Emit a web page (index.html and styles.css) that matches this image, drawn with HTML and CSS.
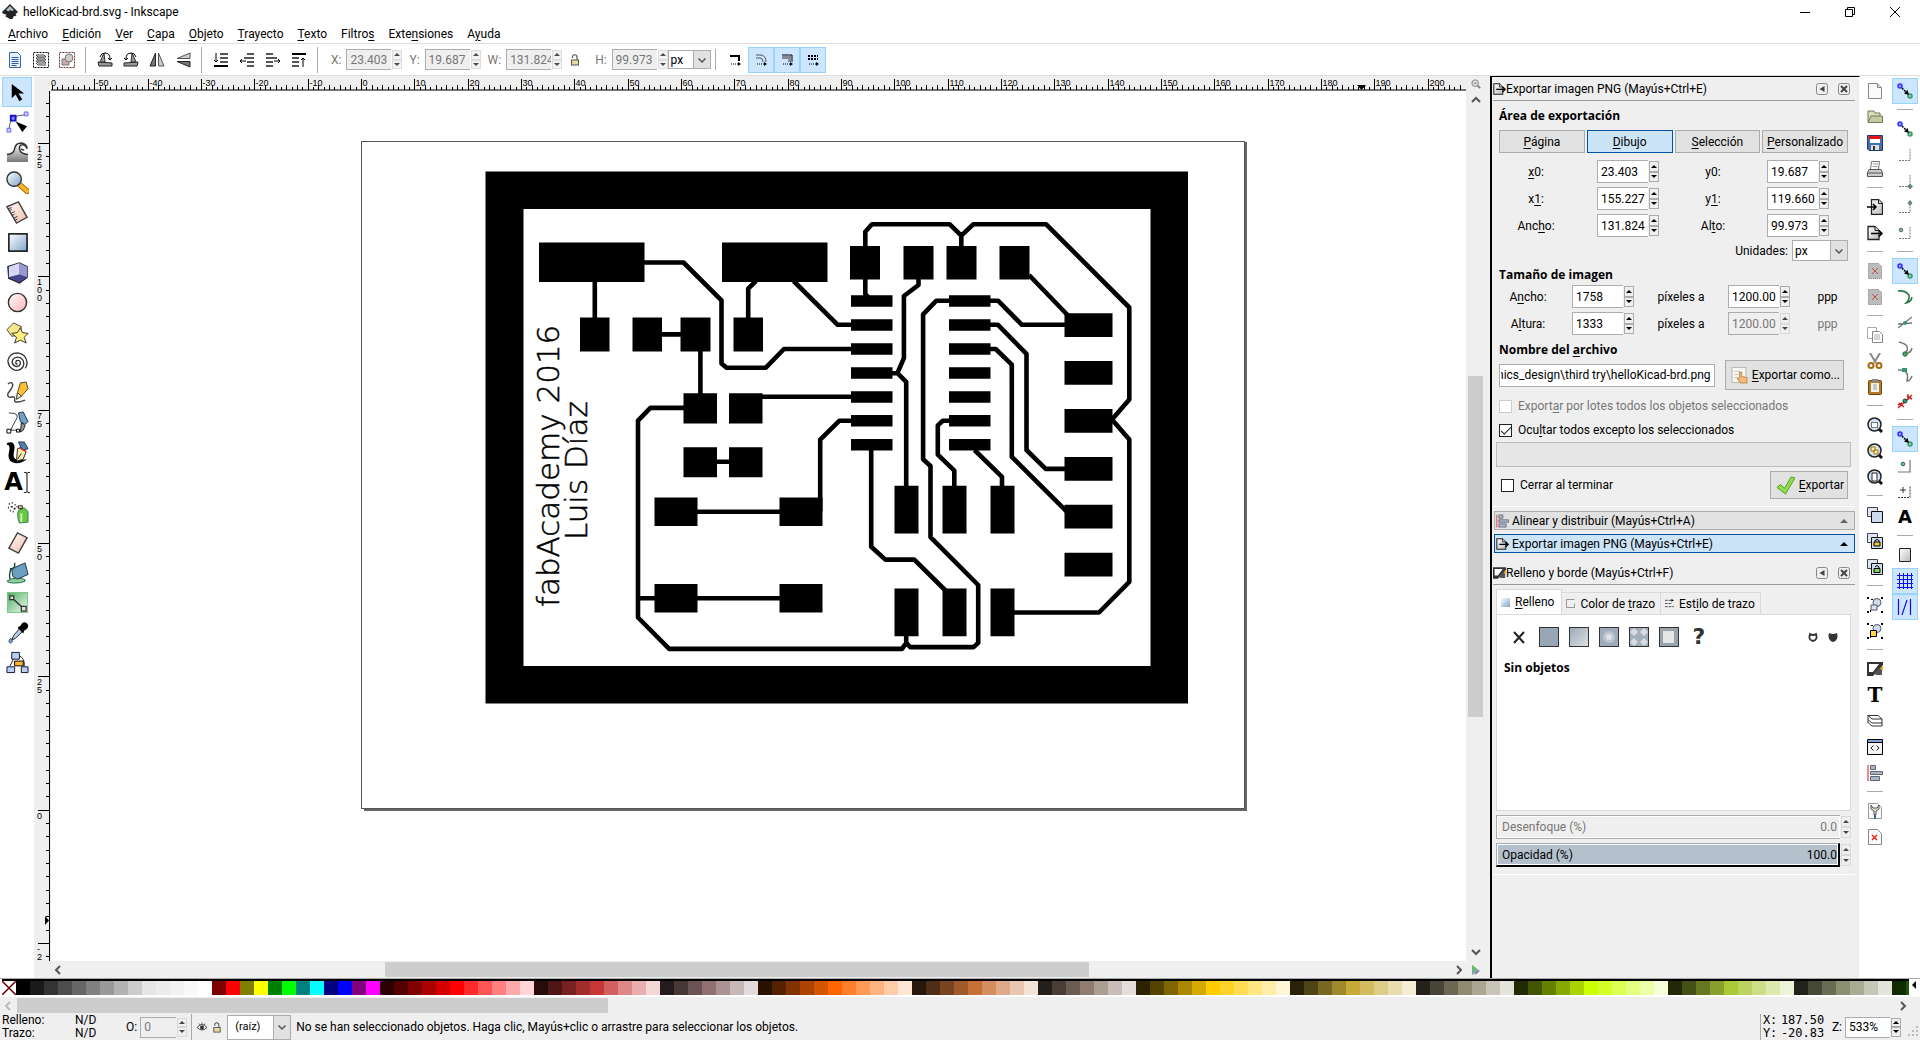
FILE: index.html
```html
<!DOCTYPE html>
<html lang="es">
<head>
  <meta charset="UTF-8">
  <meta name="viewport" content="width=device-width, initial-scale=1.0">
  <title>helloKicad-brd.svg - Inkscape</title>
  <link rel="stylesheet" href="styles.css">
</head>
<body>
  <!-- Iconos compartidos -->
  <svg class="defs" aria-hidden="true">
    <defs>
      <linearGradient id="blue" x1="0" y1="0" x2="1" y2="1"><stop offset="0" stop-color="#fff"/><stop offset="1" stop-color="#7fa3cc"/></linearGradient>
      <linearGradient id="pink" x1="0" y1="0" x2="1" y2="1"><stop offset="0" stop-color="#fff"/><stop offset="1" stop-color="#f3b9a4"/></linearGradient>
      <linearGradient id="rose" x1="0" y1="0" x2="1" y2="1"><stop offset="0" stop-color="#fff"/><stop offset="1" stop-color="#ffb0b8"/></linearGradient>
      <linearGradient id="green" x1="0" y1="0" x2="1" y2="1"><stop offset="0" stop-color="#4fae62"/><stop offset="1" stop-color="#f2fbf3"/></linearGradient>
      <linearGradient id="gray" x1="0" y1="0" x2="0" y2="1"><stop offset="0" stop-color="#fff"/><stop offset="1" stop-color="#777"/></linearGradient>
      <linearGradient id="sheet" x1="0" y1="0" x2="1" y2="1"><stop offset="0" stop-color="#fff"/><stop offset="1" stop-color="#bbb"/></linearGradient>
      <linearGradient id="linear" x1="0" y1="0" x2="1" y2="1"><stop offset="0" stop-color="#9aa8b7"/><stop offset="1" stop-color="#dfe2e5"/></linearGradient>
    </defs>
    <symbol id="snap" viewBox="0 0 16 16"><circle cx="3" cy="3" r="2" fill="#99f" stroke="#33f" stroke-width="1.5"/><circle cx="13" cy="13" r="2" fill="#8c9" stroke="#396" stroke-width="1.5"/><path d="M5 5l5 5" stroke="#000" stroke-width="1.5" stroke-dasharray="2 1"/><path d="M12 12l-5-1.500 3.500-3.500z"/></symbol>
    <symbol id="lens" viewBox="0 0 16 16"><path d="M12 12l3 3" stroke="#111" stroke-width="3"/><circle cx="7.500" cy="7.500" r="6.500" fill="#d3e1f5" stroke="#222" stroke-width="1.500"/></symbol>
    <symbol id="page-out" viewBox="0 0 16 16"><path d="M1 1.500h7l4 4v9H1z" fill="url(#sheet)" stroke="#222" stroke-width="1.300"/><path d="M8 1.500v4h4" fill="#ccc" stroke="#222"/><path d="M4 8.500h11M12 5.500l3 3-3 3" fill="none" stroke="#000" stroke-width="1.500"/></symbol>
    <symbol id="pen-fill" viewBox="0 0 16 16"><path d="M0 1h16v3L6 15H0z" fill="#333"/><path d="M2 3h10l-6 8H2z" fill="#fff"/><path d="M15 4v10H9L7 12z" fill="#555"/><path d="M16 4v5l-3-1z" fill="#f5b21a"/></symbol>
    <symbol id="align" viewBox="0 0 16 16"><path d="M1 0v16" stroke="#d66" stroke-width="1.500"/><path d="M3.500 .500h5v4h-5zM3.500 6.500h12v3h-12zM3.500 11.500h9v4h-9z" fill="#a9b8c9" stroke="#667"/></symbol>
    <symbol id="collapse" viewBox="0 0 12 12"><rect x=".500" y=".500" width="11" height="11" rx="2" fill="none" stroke="#888"/><path d="M8.500 3v6L3.500 6z" fill="#444"/></symbol>
    <symbol id="close" viewBox="0 0 12 12"><rect x=".500" y=".500" width="11" height="11" rx="2" fill="none" stroke="#888"/><path d="M3 3l6 6M9 3L3 9" stroke="#444" stroke-width="2"/></symbol>
    <symbol id="chevron" viewBox="0 0 10 10"><path d="M1.500 3.500L5 7l3.500-3.500" fill="none" stroke="#555" stroke-width="1.500"/></symbol>
    <symbol id="lock" viewBox="0 0 10 12"><path d="M2.500 4V3a2 2 0 0 1 4.500 0V6" fill="none" stroke="#555" stroke-width="1.200"/><rect x="1.500" y="6" width="7" height="5" fill="#e8dc9a" stroke="#555"/></symbol>
    <symbol id="corner" viewBox="0 0 16 16"><path d="M2 13.500h11V2" fill="none" stroke="#777" stroke-width="1" stroke-dasharray="2 1"/></symbol>
    <symbol id="doc-off" viewBox="0 0 16 16"><path d="M1.500 .500h10l3 3v12h-13z" fill="#bbb" stroke="#777" stroke-dasharray="1 1"/><path d="M5 5l6 6M11 5l-6 6" stroke="#b55"/></symbol>
    <symbol id="pair" viewBox="0 0 16 16"><path d="M.500 .500h10v9H.500z" fill="#dce6f2" stroke="#445"/><path d="M4.500 4.500h11v11h-11z" fill="#cfdced" stroke="#111"/></symbol>
    <symbol id="group" viewBox="0 0 16 16"><path d="M0 0h2v2H0zM14 0h2v2h-2zM0 14h2v2H0zM14 14h2v2h-2zM4 2h2v1H4zM3 13h1v2H3z"/><circle cx="10" cy="5.500" r="4" fill="#cfdced" stroke="#556"/></symbol>
  </svg>

  <header class="titlebar">
    <svg class="logo" viewBox="0 0 16 16"><path d="M8 0l7.500 7.500q1 1.500-2 2l1 2-3 1-1 2.500H8l-2-1-3-2 2-1-4-1.500Q-.500 9 .500 7.500z" fill="#222"/><path d="M8 2l4 4-2 1-2-1-1.500 1.500L4 6z" fill="#aebdcc"/></svg>
    <h1>helloKicad-brd.svg - Inkscape</h1>
    <div class="window-buttons">
      <button aria-label="Minimizar"><svg viewBox="0 0 10 10"><path d="M0 5.500h10" stroke="#000"/></svg></button>
      <button aria-label="Restaurar"><svg viewBox="0 0 10 10"><path d="M.500 2.500h7v7h-7zM2.500 2.500v-2h7v7h-2" fill="none" stroke="#000"/></svg></button>
      <button aria-label="Cerrar"><svg viewBox="0 0 10 10"><path d="M0 0l10 10M10 0L0 10" stroke="#000"/></svg></button>
    </div>
  </header>

  <nav class="menubar">
    <a href="#"><u>A</u>rchivo</a>
    <a href="#"><u>E</u>dición</a>
    <a href="#"><u>V</u>er</a>
    <a href="#"><u>C</u>apa</a>
    <a href="#"><u>O</u>bjeto</a>
    <a href="#"><u>T</u>rayecto</a>
    <a href="#"><u>T</u>exto</a>
    <a href="#">Filtro<u>s</u></a>
    <a href="#">Exte<u>n</u>siones</a>
    <a href="#">A<u>y</u>uda</a>
  </nav>

  <!-- Controles de herramienta -->
  <div class="controls">
    <div class="icon-group">
      <button aria-label="Seleccionar todo"><svg viewBox="0 0 16 16"><path d="M2.500 .500h8l3 3v12h-11z" fill="#e8f0fb" stroke="#35659f"/><path d="M4.500 5.500h7M4.500 7.500h7M4.500 9.500h7M4.500 11.500h7M4.500 13.500h5" stroke="#2a5ca0"/></svg></button>
      <button aria-label="Seleccionar en todas las capas"><svg viewBox="0 0 16 16"><rect x=".500" y=".500" width="15" height="15" fill="none" stroke="#000" stroke-dasharray="2 1"/><path d="M3 3h8l2 2H5zM3 6h8l2 2H5zM3 9h8l2 2H5zM3 11l2 2h8" fill="#eee" stroke="#444"/></svg></button>
      <button aria-label="Deseleccionar"><svg viewBox="0 0 16 16"><rect x=".500" y=".500" width="15" height="15" fill="none" stroke="#733" stroke-dasharray="2 1"/><path d="M3 7h7v6H3z" fill="#caa" stroke="#777"/><circle cx="10" cy="6" r="4" fill="#ccc" stroke="#777"/></svg></button>
    </div>
    <div class="icon-group">
      <button aria-label="Rotar a la izquierda"><svg viewBox="0 0 16 16"><path d="M1 10l14 1v3H2z" fill="#999" stroke="#222"/><path d="M7 1l1 9H3z" fill="#999" stroke="#333"/><path d="M3 5q1-4 5-4 5 0 5 6M11 6l2 2 2-2" fill="none" stroke="#000"/></svg></button>
      <button aria-label="Rotar a la derecha"><svg viewBox="0 0 16 16"><path d="M1 11l14-1-1 4H1z" fill="#999" stroke="#222"/><path d="M9 1l-1 9h5z" fill="#999" stroke="#333"/><path d="M13 5q-1-4-5-4-5 0-5 6M1 6l2 2 2-2" fill="none" stroke="#000"/></svg></button>
      <button aria-label="Reflejar horizontalmente"><svg viewBox="0 0 16 16"><path d="M6.500 1v13H1z" fill="#777" stroke="#222"/><path d="M9.500 1v13H15z" fill="#ccc" stroke="#555"/></svg></button>
      <button aria-label="Reflejar verticalmente"><svg viewBox="0 0 16 16"><path d="M15 1v5.500H2z" fill="#ccc" stroke="#555"/><path d="M15 15V9.500H2z" fill="#777" stroke="#222"/></svg></button>
    </div>
    <div class="icon-group">
      <button aria-label="Bajar al fondo"><svg viewBox="0 0 16 16"><path d="M7 2h8M7 6h8M7 10h8" stroke="#555" stroke-width="2"/><path d="M1 14h14" stroke="#000" stroke-width="2"/><path d="M3 1v9M1 8l2 2 2-2" fill="none" stroke="#000"/></svg></button>
      <button aria-label="Bajar"><svg viewBox="0 0 16 16"><path d="M8 2h7M5 6h10M8 10h7M8 14h7" stroke="#555" stroke-width="2"/><path d="M7 9H1M3 7L1 9l2 2" fill="none" stroke="#000"/></svg></button>
      <button aria-label="Elevar"><svg viewBox="0 0 16 16"><path d="M1 2h7M1 6h11M1 10h7M1 14h7" stroke="#555" stroke-width="2"/><path d="M9 9h6M13 7l2 2-2 2" fill="none" stroke="#000"/></svg></button>
      <button aria-label="Elevar al frente"><svg viewBox="0 0 16 16"><path d="M1 6h7M1 10h7M1 14h7" stroke="#555" stroke-width="2"/><path d="M1 2h14" stroke="#000" stroke-width="2"/><path d="M12 15V6M10 8l2-2 2 2" fill="none" stroke="#000"/></svg></button>
    </div>
    <div class="fields">
      <label for="sel-x">X:</label>
      <span class="spin"><input id="sel-x" value="23.403" disabled><span class="arrows"><button disabled aria-label="Más"></button><button disabled aria-label="Menos"></button></span></span>
      <label for="sel-y">Y:</label>
      <span class="spin"><input id="sel-y" value="19.687" disabled><span class="arrows"><button disabled aria-label="Más"></button><button disabled aria-label="Menos"></button></span></span>
      <label for="sel-w">W:</label>
      <span class="spin"><input id="sel-w" value="131.824" disabled><span class="arrows"><button disabled aria-label="Más"></button><button disabled aria-label="Menos"></button></span></span>
      <button class="lock" aria-label="Bloquear proporción"><svg viewBox="0 0 10 12"><use href="#lock"/></svg></button>
      <label for="sel-h">H:</label>
      <span class="spin"><input id="sel-h" value="99.973" disabled><span class="arrows"><button disabled aria-label="Más"></button><button disabled aria-label="Menos"></button></span></span>
      <span class="combo unit"><select aria-label="Unidad"><option>px</option></select><svg><use href="#chevron"/></svg></span>
    </div>
    <div class="toggles">
      <button aria-label="Escalar trazo"><svg viewBox="0 0 16 16"><path d="M3 4h9v5" fill="none" stroke="#000" stroke-width="2"/><path d="M4 12h8" stroke="#000" stroke-dasharray="1 1"/><path d="M11 10l3 2-3 2z"/></svg></button>
      <button class="on" aria-label="Escalar esquinas"><svg viewBox="0 0 16 16"><path d="M3 3h4q6 0 6 7M3 6h4q3 0 3 4" fill="none" stroke="#555"/><path d="M4 12h8" stroke="#000" stroke-dasharray="1 1"/><path d="M11 10l3 2-3 2z"/></svg></button>
      <button class="on" aria-label="Mover degradados"><svg viewBox="0 0 16 16"><path d="M3 3h10v7" fill="none" stroke="#000"/><path d="M3 4h9v6H9V7H3z" fill="#889"/><path d="M4 12h8" stroke="#000" stroke-dasharray="1 1"/><path d="M11 10l3 2-3 2z"/></svg></button>
      <button class="on" aria-label="Mover patrones"><svg viewBox="0 0 16 16"><path d="M3 4h10M3 7h10" stroke="#000" stroke-width="2" stroke-dasharray="2 1"/><path d="M4 12h8" stroke="#000" stroke-dasharray="1 1"/><path d="M11 10l3 2-3 2z"/></svg></button>
    </div>
  </div>

  <main class="workspace">
    <!-- Caja de herramientas -->
    <div class="toolbox">
      <button class="on" aria-label="Selector"><svg viewBox="0 0 24 24"><path d="M6 3v15l4-4 4 7 3-2-4-6h6z"/></svg></button>
      <button aria-label="Nodos"><svg viewBox="0 0 24 24"><path d="M3 20Q3 4 20 4" fill="none" stroke="#555"/><path d="M5 5h5v5H5z" fill="#88f" stroke="#11c" stroke-width="2"/><path d="M1 18h4v4H1zM19 1h4v4h-4z" fill="#ccf" stroke="#66e"/><path d="M10 11l12 5-5 6z"/></svg></button>
      <button aria-label="Retocar"><svg viewBox="0 0 24 24"><path d="M1 14q7 0 8-6 1-6 7-6 6 1 6 6-2-3-5-2-3 2-2 5 1 3 8 3v8H1z" fill="url(#gray)"/><path d="M1 14q7 0 8-6 1-6 7-6 6 1 6 6-2-4-4-4-4-1-4 4 1 6 9 6M16 8q1 2 3 1" fill="none" stroke="#333" stroke-width="1.500"/></svg></button>
      <button aria-label="Ampliación"><svg viewBox="0 0 24 24"><path d="M15 15l7 6" stroke="#a66a00" stroke-width="6" stroke-linecap="round"/><path d="M15 15l7 6" stroke="#ffb52a" stroke-width="4" stroke-linecap="round"/><circle cx="8.500" cy="8.500" r="7.500" fill="url(#blue)" stroke="#333" stroke-width="1.500"/></svg></button>
      <button aria-label="Medir"><svg viewBox="0 0 24 24"><path d="M1 6l12-5 9 16-11 6z" fill="url(#pink)" stroke="#444" stroke-width="1.500"/><path d="M2 8l4-1M3 10l3-1M5 13l4-2M6 15l3-1M8 18l4-2M9 20l3-1" stroke="#333"/></svg></button>
      <button aria-label="Rectángulo"><svg viewBox="0 0 24 24"><rect x="3" y="3" width="19" height="18" fill="url(#blue)" stroke="#000" stroke-width="1.500"/></svg></button>
      <button aria-label="Cubo 3D"><svg viewBox="0 0 24 24"><path d="M2 6l12-4 8 4v11l-8 6-11-5z" fill="#6868b0" stroke="#223" stroke-width="1.500"/><path d="M3 6l11-4v12L3 17z" fill="#d8d8f6"/><path d="M14 2l8 4v11l-8-3z" fill="#9898d0"/><path d="M3 17l11-3 8 3-8 5z" fill="#45458b"/></svg></button>
      <button aria-label="Elipse"><svg viewBox="0 0 24 24"><circle cx="12" cy="12" r="9.500" fill="url(#rose)" stroke="#333" stroke-width="1.500"/></svg></button>
      <button aria-label="Estrella"><svg viewBox="0 0 24 24"><path d="M8 2l8 4-1 8-9 2-5-7z" fill="#f7e98b" stroke="#444"/><path d="M15 7l2 5 6 1-4 4 2 6-6-3-6 3 2-6-5-4 6-1z" fill="#ffef7d" stroke="#333"/></svg></button>
      <button aria-label="Espiral"><svg viewBox="0 0 24 24"><path d="M12 14q-3-1-1-4 4-1 4 3-1 4-5 3-5-2-3-7 3-4 8-2 5 3 3 9-3 5-9 4-7-3-7-10 2-8 10-8 9 1 10 10 0 4-2 6" fill="none" stroke="#333" stroke-width="1.400"/></svg></button>
      <button aria-label="Lápiz"><svg viewBox="0 0 24 24"><path d="M2 3q5-3 5 1 0 3-5 9-1 4 3 4 5-2 4 3 0 4 11 0" fill="none" stroke="#444" stroke-width="1.500"/><path d="M15 2l6-1 2 7-7 8-5 3 1-7z" fill="#ffbf2f" stroke="#444"/><path d="M12 12l4 4-5 3z" fill="#fff0cc" stroke="#444"/></svg></button>
      <button aria-label="Pluma"><svg viewBox="0 0 24 24"><path d="M3 2q13 0 7 8-3 5-5 10h8" fill="none" stroke="#333"/><path d="M1 19h4v4H1zM11 19h3v3h-3z" fill="#fff" stroke="#000"/><path d="M13 2l5-1 5 10-3 3-5-3z" fill="#6fa0c8" stroke="#234"/><path d="M16 12l4 3-2 5-3 2z" fill="#999" stroke="#222"/></svg></button>
      <button aria-label="Caligrafía"><svg viewBox="0 0 24 24"><path d="M1 2q8-3 8 5c-1 8-3 11 4 13l9-1q-7 5-13 4Q1 21 3 12 5 4 1 4z"/><path d="M13 1h6l4 7-6 2z" fill="#4e82ad" stroke="#234"/><path d="M12 8l3-1 6 4-3 8-7 2z" fill="#ffe9b0" stroke="#222"/><path d="M12 19l4-6" stroke="#222"/><path d="M14 7l7 4" stroke="#d22" stroke-width="1.500"/></svg></button>
      <button class="text-tool" aria-label="Texto"><b>A</b><svg viewBox="0 0 6 24"><path d="M0 1.500h2l1 1 1-1h2M3 2v20M0 22.500h2l1-1 1 1h2" fill="none" stroke="#000"/></svg></button>
      <button aria-label="Aerosol"><svg viewBox="0 0 24 24"><path d="M3 3h1M6 2h1M9 4h1M2 7h1M5 6h2M8 8h2M4 10h1M7 11h1M11 6h1" stroke="#222" stroke-width="1.800"/><path d="M13 10l6-3 4 4v11l-9 1q-3-8-1-13z" fill="#68c93f" stroke="#375"/><path d="M13 8V5h4v3z" fill="#f0d890" stroke="#222"/><path d="M16 13v9" stroke="#d4f5c0" stroke-width="2"/></svg></button>
      <button aria-label="Borrador"><svg viewBox="0 0 24 24"><path d="M12 2l10 5-9 16-10-5z" fill="url(#pink)" stroke="#444" stroke-width="1.500"/></svg></button>
      <button aria-label="Relleno"><svg viewBox="0 0 24 24"><path d="M1 21q4-3 10-3 10 0 9 3-4 2-10 2-8 0-9-2z" fill="#8fd19b" stroke="#265"/><path d="M6 8l14-6 3 12-11 5-5-3z" fill="#6c9ec0" stroke="#234"/><path d="M4 8q6 1 5-6M6 8Q3 11 4 19" fill="none" stroke="#244" stroke-width="1.500"/></svg></button>
      <button aria-label="Degradado"><svg viewBox="0 0 24 24"><rect x="1.500" y="1.500" width="21" height="21" fill="url(#green)" stroke="#7cc38a"/><path d="M6 7l11 10" stroke="#333" stroke-width="1.500"/><path d="M4 5h4v4H4zM16 16h5v5h-5z" fill="#ddd" stroke="#333" stroke-width="1.300"/></svg></button>
      <button aria-label="Cuentagotas"><svg viewBox="0 0 24 24"><path d="M15 7l3 3-8 8-4 2 2-5z" fill="#b6cdeb" stroke="#222"/><path d="M12 7l6 6 1-3q5-2 4-6-2-4-6-2l-2 3z"/><path d="M5 18q-4 4 0 5 3-1 0-5z" fill="#79a6dc" stroke="#357"/></svg></button>
      <button aria-label="Conector"><svg viewBox="0 0 24 24"><path d="M8 8L4 16M14 5q6 3 5 11" fill="none" stroke="#222"/><path d="M6 1.500h8v7H6zM1 16.500h8v6H1zM16 16.500h7v6h-7z" fill="#b9d0ef" stroke="#113"/><path d="M9 10.500h9v5H9z" fill="#ffb52a" stroke="#000"/></svg></button>
    </div>

    <div class="editor">
      <svg class="ruler ruler-h" id="ruler-h"></svg>
      <button class="zoom-corner" aria-label="Zoom"><svg viewBox="0 0 12 12"><circle cx="5" cy="5" r="4" fill="#ddd" stroke="#777"/><path d="M8 8l3 3" stroke="#777" stroke-width="2"/><path d="M3 5h4" stroke="#777"/></svg></button>
      <svg class="ruler ruler-v" id="ruler-v"></svg>
      <svg class="canvas">
        <path d="M313 718.500H1194.500V51" fill="none" stroke="#666" stroke-width="3"/>
        <rect x="310.500" y="50.500" width="883" height="667" fill="#fff" stroke="#555"/>
        <g transform="translate(429 69)">
          <path d="M5.500 11.500H708V543.500H5.500zM43.500 49V506H670.500V49z" fill-rule="evenodd"/>
          <!-- pads -->
          <path d="M59 82.500h105.500v39.500H59zM242 82.500h105.500v39.500H242zM370 86h30v33.500h-30zM423.500 86h30v33.500h-30zM466.500 86h30v33.500h-30zM519.500 86h30v33.500h-30z
            M100 157.500h29.500v34H100zM152.500 157.500h29.500v34h-29.500zM200.500 157.500h30v34h-30zM253.500 157.500h29.500v34h-29.500z
            M371 135.300h41.500v11.500H371zM371 159.300h41.500v11.500H371zM371 183.200h41.500v11.500H371zM371 207.200h41.500v11.500H371zM371 231.200h41.500v11.500H371zM371 255.100h41.500v11.500H371zM371 279.100h41.500v11.500H371z
            M469 135.300h41.500v11.500H469zM469 159.300h41.500v11.500H469zM469 183.200h41.500v11.500H469zM469 207.200h41.500v11.500H469zM469 231.200h41.500v11.500H469zM469 255.100h41.500v11.500H469zM469 279.100h41.500v11.500H469z
            M584.500 153.200h48v23.700h-48zM584.500 201.100h48v23.700h-48zM584.500 249h48v23.700h-48zM584.500 297h48v23.700h-48zM584.500 344.800h48v23.700h-48zM584.500 392.800h48v23.700h-48z
            M203.500 233.300h33.500v30.200h-33.500zM249 233.300h33.500v30.200H249zM203.500 287.200h33.500v30h-33.500zM249 287.200h33.500v30H249z
            M174.500 337.500h43v28.500h-43zM299.500 337.500h43v28.500h-43zM174.500 424h43v28.500h-43zM299.500 424h43v28.500h-43z
            M414.500 325.700h24v47.700h-24zM462.500 325.700h24v47.700h-24zM510.500 325.700h24v47.700h-24zM414.500 428.600h24v47.700h-24zM462.500 428.600h24v47.700h-24zM510.500 428.600h24v47.700h-24z"/>
          <!-- pistas -->
          <path fill="none" stroke="#000" stroke-width="4.600" stroke-linejoin="round" d="M114.800 121V158
            M164 102.500H203.500L241.500 140.300V203.500L246.600 207.800H285.600L304 189H371
            M181 174.400H201M220.400 191V234M268.200 158V128.600L276 121M313.600 121L357.700 164.800H371
            M385.300 86V71.800L392 64.300H469.800L481.300 75.700V86
            M481.300 75.700L493.200 64.300H566.200L649.300 147.500V239.600L632 259.500L649.300 279.600V421.800L619 452.500H534
            M385.300 119V134L388 137M438.500 119V125L423.900 136V198.200L417.400 213.200L426.200 221.800V326M412 213.200H417.400
            M549 115L588 155.500
            M469 140.700H456.400L443.100 154.300V299.300L450.500 306V377.100L498.200 425V482.900L493.600 487.100H430.300L426.200 482.900V476
            M426.200 482.900L422 488.900H189.200L158 457.500V260.700L170.400 247.900H204
            M158 438.200H175M217 438.200H300M217 351.800H300
            M510 140.700H518L541.900 164.800H585M510 164.800H518L546.500 193.900V290L565.700 308.900H585
            M510 189H515.700L531.800 204.700V296.800L587 351.800
            M469 260.700H462.800L457.800 265.400V294.600L474.300 310.700V326M494.500 290L522 316.800V326
            M282 236.800H371M371 260.700H359.500L340.200 279.600V351
            M391.200 290V386.800L405.400 399.600H434.300L466 431M236 301.800H250"/>
          <text class="silk" transform="translate(79 447) rotate(-90)">fabAcademy 2016</text>
          <text class="silk" transform="translate(107 380) rotate(-90)">Luis Díaz</text>
        </g>
      </svg>
      <div class="scroll scroll-v">
        <svg viewBox="0 0 10 10"><path d="M1 7l4-4 4 4" fill="none" stroke="#555" stroke-width="2"/></svg>
        <div class="track"><div class="thumb"></div></div>
        <svg viewBox="0 0 10 10"><path d="M1 3l4 4 4-4" fill="none" stroke="#555" stroke-width="2"/></svg>
      </div>
      <div class="scroll scroll-h">
        <svg viewBox="0 0 10 10"><path d="M7 1L3 5l4 4" fill="none" stroke="#555" stroke-width="2"/></svg>
        <div class="track"><div class="thumb"></div></div>
        <svg viewBox="0 0 10 10"><path d="M3 1l4 4-4 4" fill="none" stroke="#555" stroke-width="2"/></svg>
      </div>
      <button class="cms-corner" aria-label="Gestión de color"><svg viewBox="0 0 10 10"><path d="M1 0l8 6-8 4z" fill="#7aa"/><path d="M1 0l4 3-4 4z" fill="#6b6"/><path d="M5 7l4-1-5 4z" fill="#a57"/></svg></button>
    </div>

    <!-- Panel de diálogos -->
    <aside class="dock">
      <div class="dialog-head">
        <svg class="i14"><use href="#page-out"/></svg>
        <h2>Exportar imagen PNG (Mayús+Ctrl+E)</h2>
        <button aria-label="Iconizar"><svg><use href="#collapse"/></svg></button>
        <button aria-label="Cerrar"><svg><use href="#close"/></svg></button>
      </div>
      <form class="export">
        <h3>Área de exportación</h3>
        <div class="area-buttons">
          <button type="button"><span><u>P</u>ágina</span></button>
          <button type="button" class="on"><span><u>D</u>ibujo</span></button>
          <button type="button"><span><u>S</u>elección</span></button>
          <button type="button"><span><u>P</u>ersonalizado</span></button>
        </div>
        <div class="area-grid">
          <label for="x0"><u>x</u>0:</label>
          <span class="spin"><input id="x0" value="23.403"><span class="arrows"><button type="button" aria-label="Más"></button><button type="button" aria-label="Menos"></button></span></span>
          <label for="y0">y0:</label>
          <span class="spin"><input id="y0" value="19.687"><span class="arrows"><button type="button" aria-label="Más"></button><button type="button" aria-label="Menos"></button></span></span>
          <label for="x1">x<u>1</u>:</label>
          <span class="spin"><input id="x1" value="155.227"><span class="arrows"><button type="button" aria-label="Más"></button><button type="button" aria-label="Menos"></button></span></span>
          <label for="y1">y<u>1</u>:</label>
          <span class="spin"><input id="y1" value="119.660"><span class="arrows"><button type="button" aria-label="Más"></button><button type="button" aria-label="Menos"></button></span></span>
          <label for="area-w">Anc<u>h</u>o:</label>
          <span class="spin"><input id="area-w" value="131.824"><span class="arrows"><button type="button" aria-label="Más"></button><button type="button" aria-label="Menos"></button></span></span>
          <label for="area-h">Al<u>t</u>o:</label>
          <span class="spin"><input id="area-h" value="99.973"><span class="arrows"><button type="button" aria-label="Más"></button><button type="button" aria-label="Menos"></button></span></span>
        </div>
        <div class="units">
          <label for="units">Unidades:</label>
          <span class="combo"><select id="units"><option>px</option></select><svg><use href="#chevron"/></svg></span>
        </div>
        <h3>Tamaño de imagen</h3>
        <div class="size-grid">
          <label for="img-w">A<u>n</u>cho:</label>
          <span class="spin"><input id="img-w" value="1758"><span class="arrows"><button type="button" aria-label="Más"></button><button type="button" aria-label="Menos"></button></span></span>
          <label for="dpi-x">píxeles a</label>
          <span class="spin"><input id="dpi-x" value="1200.00"><span class="arrows"><button type="button" aria-label="Más"></button><button type="button" aria-label="Menos"></button></span></span>
          <span>ppp</span>
          <label for="img-h">A<u>l</u>tura:</label>
          <span class="spin"><input id="img-h" value="1333"><span class="arrows"><button type="button" aria-label="Más"></button><button type="button" aria-label="Menos"></button></span></span>
          <label for="dpi-y">píxeles a</label>
          <span class="spin"><input id="dpi-y" value="1200.00" disabled><span class="arrows"><button type="button" disabled aria-label="Más"></button><button type="button" disabled aria-label="Menos"></button></span></span>
          <span class="muted">ppp</span>
        </div>
        <h3><label for="filename">Nombre del <u>a</u>rchivo</label></h3>
        <div class="file-row">
          <input id="filename" class="entry" value="nics_design\third try\helloKicad-brd.png">
          <button type="button" class="big"><svg viewBox="0 0 16 16"><path d="M1 .500h13v14H1z" fill="#f6f6f2" stroke="#bbb"/><path d="M3 4h6M3 7h4M3 10h4" stroke="#ccc"/><path d="M8 5h2v4l5 1v5H9l-3-4 2-1z" fill="#f0bd80" stroke="#c98f4c"/></svg><span><u>E</u>xportar como...</span></button>
        </div>
        <label class="check muted"><input type="checkbox" disabled><span>Export<u>a</u>r por lotes todos los objetos seleccionados</span></label>
        <label class="check"><input type="checkbox" checked><span>Ocu<u>l</u>tar todos excepto los seleccionados</span></label>
        <div class="progress"></div>
        <div class="export-row">
          <label class="check"><input type="checkbox"><span>Cerrar al terminar</span></label>
          <button type="button" class="big"><svg viewBox="0 0 20 20"><path d="M1 12l4-3 4 4 7-12 4 1-10 17z" fill="#8fe04a" stroke="#4f9a24"/></svg><span><u>E</u>xportar</span></button>
        </div>
      </form>
      <div class="dialog-tabs">
        <button><svg class="i14"><use href="#align"/></svg><span>Alinear y distribuir (Mayús+Ctrl+A)</span><i></i></button>
        <button class="on"><svg class="i14"><use href="#page-out"/></svg><span>Exportar imagen PNG (Mayús+Ctrl+E)</span><i></i></button>
      </div>
      <div class="dialog-head">
        <svg class="i14"><use href="#pen-fill"/></svg>
        <h2>Relleno y borde (Mayús+Ctrl+F)</h2>
        <button aria-label="Iconizar"><svg><use href="#collapse"/></svg></button>
        <button aria-label="Cerrar"><svg><use href="#close"/></svg></button>
      </div>
      <section class="fill">
        <div class="tabs">
          <button class="on"><svg viewBox="0 0 10 10"><rect width="10" height="10" fill="url(#blue)"/></svg><span><u>R</u>elleno</span></button>
          <button><svg viewBox="0 0 10 10"><path d="M9.500 5v4.500h-9v-9h9" fill="none" stroke="#888"/></svg><span>Color de <u>t</u>razo</span></button>
          <button><svg viewBox="0 0 10 10"><path d="M0 1.500h8M0 5h8M0 8.500h10" stroke="#444" stroke-dasharray="3 1"/><path d="M7 0l3 1.500L7 3z"/></svg><span>Est<u>i</u>lo de trazo</span></button>
        </div>
        <div class="tab-page">
          <div class="paint">
            <button aria-label="Sin pintura"><svg viewBox="0 0 20 20"><path d="M5 5l10 11M15 5L5 16" stroke="#222" stroke-width="2"/></svg></button>
            <button aria-label="Color uniforme"><svg viewBox="0 0 20 20"><rect x=".500" y=".500" width="19" height="19" fill="#98a6b6" stroke="#333"/></svg></button>
            <button aria-label="Degradado lineal"><svg viewBox="0 0 20 20"><rect x=".500" y=".500" width="19" height="19" fill="url(#linear)" stroke="#333"/></svg></button>
            <button aria-label="Degradado radial"><svg viewBox="0 0 20 20"><rect x=".500" y=".500" width="19" height="19" fill="#9eacbc" stroke="#333"/><circle cx="10" cy="10" r="6" fill="#bac5d0"/><circle cx="10" cy="10" r="3" fill="#dde3e9"/></svg></button>
            <button aria-label="Patrón"><svg viewBox="0 0 20 20"><rect x=".500" y=".500" width="19" height="19" fill="#a3afbd" stroke="#333"/><path d="M5 1l4 4-4 4-4-4zM15 1l4 4-4 4-4-4zM5 11l4 4-4 4-4-4zM15 11l4 4-4 4-4-4z" fill="#d9dce0"/></svg></button>
            <button aria-label="Muestra"><svg viewBox="0 0 20 20"><rect x=".500" y=".500" width="19" height="19" fill="#9aa4af" stroke="#333"/><path d="M4 4h11v12H4z" fill="#e4e6e8"/></svg></button>
            <button aria-label="Desconocido"><b>?</b></button>
            <span class="rules">
              <button aria-label="Par-impar"><svg viewBox="0 0 10 10"><path d="M2 2q3 2 6 0 2 6-3 7-5-1-3-7z" fill="none" stroke="#333" stroke-width="1.800"/></svg></button>
              <button aria-label="Sólido"><svg viewBox="0 0 10 10"><path d="M1 1q4 2 8 0 2 7-4 9-6-2-4-9z" fill="#333"/></svg></button>
            </span>
          </div>
          <strong>Sin objetos</strong>
        </div>
        <div class="bar muted">
          <div class="bar-body"><label for="blur">Desenfoque (%)</label><input id="blur" value="0.0" disabled></div>
          <span class="arrows"><button disabled aria-label="Más"></button><button disabled aria-label="Menos"></button></span>
        </div>
        <div class="bar full">
          <div class="bar-body"><label for="opacity">Opacidad (%)</label><input id="opacity" value="100.0"></div>
          <span class="arrows"><button disabled aria-label="Más"></button><button disabled aria-label="Menos"></button></span>
        </div>
      </section>
    </aside>

    <!-- Barra de comandos -->
    <div class="sidebar commands">
      <button aria-label="Nuevo"><svg viewBox="0 0 16 16"><path d="M1.500 .500h9l4 4v11h-13z" fill="#fafafa" stroke="#888"/><path d="M10.500 .500v4h4" fill="#ddd" stroke="#888"/></svg></button>
      <button aria-label="Abrir"><svg viewBox="0 0 16 16"><path d="M1 13V2h6l1 2h5v3" fill="#d9dcb8" stroke="#77795c"/><path d="M1 13.500L4 7h11.500v6.500z" fill="#c5caa3" stroke="#77795c"/></svg></button>
      <button aria-label="Guardar"><svg viewBox="0 0 16 16"><path d="M.500 .500h15v15H2l-1.500-1.500z" fill="#456fb0" stroke="#223b66"/><path d="M3 1h10v7H3z" fill="#fff"/><path d="M2 1h12v3H2z" fill="#e01515"/><path d="M4 10h8v5H4z" fill="#ddd"/><path d="M6 11h2v4H6z" fill="#333"/></svg></button>
      <button aria-label="Imprimir"><svg viewBox="0 0 16 16"><path d="M4.500 .500h8l-1 8h-8z" fill="#fff" stroke="#777"/><path d="M6 3h5M5.500 5.500h5" stroke="#999"/><path d="M2 8.500h12l1.500 3v4H.500v-4z" fill="#ccc" stroke="#555"/><path d="M1 12h14" stroke="#555"/></svg></button>
      <hr>
      <button aria-label="Importar"><svg viewBox="0 0 16 16"><path d="M4.500 .500h7l4 4v11h-11z" fill="url(#sheet)" stroke="#222" stroke-width="1.300"/><path d="M11.500 .500v4h4" fill="#ccc" stroke="#222"/><path d="M0 8h9M6 5l3 3-3 3" fill="none" stroke="#000" stroke-width="1.500"/></svg></button>
      <button aria-label="Exportar"><svg><use href="#page-out"/></svg></button>
      <hr>
      <button aria-label="Deshacer"><svg><use href="#doc-off"/></svg></button>
      <button aria-label="Rehacer"><svg><use href="#doc-off"/></svg></button>
      <hr>
      <button aria-label="Copiar"><svg viewBox="0 0 16 16"><path d="M.500 .500h9v11h-9z" fill="#fff" stroke="#aaa"/><path d="M5.500 4.500h7l3 3v8h-10z" fill="#fff" stroke="#888"/><path d="M7 8h6M7 10h6M7 12h6" stroke="#aaa"/></svg></button>
      <button aria-label="Cortar"><svg viewBox="0 0 16 16"><path d="M3 0l6 10M13 0L7 10" stroke="#888" stroke-width="2"/><circle cx="4" cy="12.500" r="2.500" fill="none" stroke="#a96b12" stroke-width="2"/><circle cx="12" cy="12.500" r="2.500" fill="none" stroke="#a96b12" stroke-width="2"/></svg></button>
      <button aria-label="Pegar"><svg viewBox="0 0 16 16"><rect x="1.500" y="1.500" width="13" height="14" rx="1" fill="#b57a2a" stroke="#6d4510"/><path d="M4 4h8v9H4z" fill="#f6f6f0"/><path d="M5 0h6v3H5z" fill="#888"/><path d="M6 6h4M6 8h4M6 10h4" stroke="#999"/></svg></button>
      <hr>
      <button aria-label="Ajustar selección"><svg viewBox="0 0 16 16"><use href="#lens"/><path d="M4.500 5.500h6v5h-6z" fill="#fff" stroke="#000" stroke-dasharray="1 1"/></svg></button>
      <button aria-label="Ajustar dibujo"><svg viewBox="0 0 16 16"><use href="#lens"/><path d="M4 4h4v4H4zM7 7h4v4H7z" fill="#ffe9a8" stroke="#a70"/></svg></button>
      <button aria-label="Ajustar página"><svg viewBox="0 0 16 16"><use href="#lens"/><path d="M5 4h5v8H5z" fill="#fff" stroke="#222"/></svg></button>
      <hr>
      <button aria-label="Duplicar"><svg><use href="#pair"/></svg></button>
      <button aria-label="Clonar"><svg viewBox="0 0 16 16"><use href="#pair"/><path d="M7 9h6v4H7z" fill="#f7c430" stroke="#000"/><path d="M8 9V7.500q2-2 4 0V9" fill="none" stroke="#000"/></svg></button>
      <button aria-label="Desvincular clon"><svg viewBox="0 0 16 16"><use href="#pair"/><path d="M7 9.500h6v4H7z" fill="#7ed957" stroke="#000"/><path d="M8 8q2-3 4 0v1" fill="none" stroke="#000"/></svg></button>
      <hr>
      <button aria-label="Agrupar"><svg viewBox="0 0 16 16"><use href="#group"/><path d="M4 8h6v5H4z" fill="#dbe6f3" stroke="#556"/></svg></button>
      <button aria-label="Desagrupar"><svg viewBox="0 0 16 16"><use href="#group"/><path d="M3.500 7.500h6v6h-6z" fill="#ffd84a" stroke="#000"/></svg></button>
      <hr>
      <button aria-label="Relleno y borde"><svg><use href="#pen-fill"/></svg></button>
      <button class="glyph serif" aria-label="Texto y tipografía"><b>T</b></button>
      <button aria-label="Capas"><svg viewBox="0 0 16 16"><path d="M1 2.500h10l4 3.500H5zM1 6.500l4 3.500h10M1 9.500l4 3.500h10" fill="#fff" stroke="#333"/><path d="M1 2v8M15 6v7" stroke="#333"/></svg></button>
      <button aria-label="Editor XML"><svg viewBox="0 0 16 16"><path d="M.500 .500h15v15H.500z" fill="#f4f4f4" stroke="#000"/><path d="M1 1h14v2H1z" fill="#7da7d9"/><path d="M1 3.500h14" stroke="#000"/><path d="M6.500 6.500L4 9l2.500 2.500M9.500 6.500L12 9l-2.500 2.500" fill="none" stroke="#222"/></svg></button>
      <button aria-label="Alinear y distribuir"><svg><use href="#align"/></svg></button>
      <hr>
      <button aria-label="Preferencias"><svg viewBox="0 0 16 16"><path d="M1.500 .500h9l4 4v11h-13z" fill="#fafafa" stroke="#999"/><path d="M4 2v4l3 2v4h2V8l3-2V2l-2 3H6z" fill="#ddd" stroke="#555"/><path d="M7 12h2v4H7z" fill="#36a"/></svg></button>
      <button aria-label="Propiedades del documento"><svg viewBox="0 0 16 16"><path d="M1.500 .500h9l4 4v11h-13z" fill="#fafafa" stroke="#888"/><path d="M5 6l5 5M10 6l-5 5" stroke="#e22" stroke-width="1.500"/></svg></button>
    </div>

    <!-- Barra de ajuste -->
    <div class="sidebar snapbar">
      <button class="on" aria-label="Activar ajuste"><svg><use href="#snap"/></svg></button>
      <hr>
      <button aria-label="Ajustar cajas"><svg><use href="#snap"/></svg></button>
      <button aria-label="Bordes"><svg><use href="#corner"/></svg></button>
      <button aria-label="Esquinas"><svg viewBox="0 0 16 16"><use href="#corner"/><path d="M13 10.500l3 3-3 3-3-3z" fill="#687"/></svg></button>
      <button aria-label="Puntos medios de bordes"><svg viewBox="0 0 16 16"><use href="#corner"/><path d="M13 1l2.500 3L13 7l-2.500-3z" fill="#687"/></svg></button>
      <button aria-label="Centros"><svg viewBox="0 0 16 16"><use href="#corner"/><circle cx="4" cy="5" r="1.800" fill="#9b9" stroke="#465"/></svg></button>
      <hr>
      <button class="on" aria-label="Ajustar nodos"><svg><use href="#snap"/></svg></button>
      <button aria-label="A trayectos"><svg viewBox="0 0 16 16"><path d="M1 2q7-1 11 4 1 4-3 8 5-1 6-6" fill="none" stroke="#2a7a44" stroke-width="1.600"/></svg></button>
      <button aria-label="Intersecciones"><svg viewBox="0 0 16 16"><path d="M1 13L15 2M1 9l14-1" stroke="#777" stroke-width="1.300"/><circle cx="8" cy="8" r="2" fill="#396"/></svg></button>
      <button aria-label="Nodos vértice"><svg viewBox="0 0 16 16"><path d="M2 1q13 3 6 12 6-1 7-6" fill="none" stroke="#777" stroke-width="1.500"/><circle cx="8" cy="13" r="2.200" fill="#48a868" stroke="#264"/></svg></button>
      <button aria-label="Nodos suaves"><svg viewBox="0 0 16 16"><path d="M1 3q12-1 9 11 3 0 5-5" fill="none" stroke="#777" stroke-width="1.500"/><path d="M5 1h5v4H5z" fill="#396"/></svg></button>
      <button aria-label="Puntos medios de línea"><svg viewBox="0 0 16 16"><path d="M1 15L15 2M2 10l5 4M1 12l4-2M10 3l5 3M11 1v6" stroke="#c22" stroke-width="1.500"/><circle cx="8" cy="8" r="2" fill="#396" stroke="#143"/></svg></button>
      <hr>
      <button class="on" aria-label="Ajustar otros"><svg><use href="#snap"/></svg></button>
      <button aria-label="Centros de objetos"><svg viewBox="0 0 16 16"><path d="M1 15h12V3" fill="none" stroke="#777" stroke-width="1.200"/><circle cx="6" cy="7" r="1.800" fill="#7c8" stroke="#264"/></svg></button>
      <button aria-label="Centro de rotación"><svg viewBox="0 0 16 16"><path d="M1 14.500h12V3" fill="none" stroke="#333" stroke-dasharray="2 1"/><path d="M3 7h6M6 4v6" stroke="#333"/></svg></button>
      <button class="glyph" aria-label="Línea base de texto"><b>A</b></button>
      <hr>
      <button aria-label="Borde de página"><svg viewBox="0 0 16 16"><path d="M2.500 1.500h11v13h-11z" fill="url(#sheet)" stroke="#222"/></svg></button>
      <button class="on" aria-label="Cuadrículas"><svg viewBox="0 0 16 16"><path d="M0 2.500h16M0 6.500h16M0 10.500h16M0 14.500h16M2.500 0v16M6.500 0v16M10.500 0v16M14.500 0v16" stroke="#11e"/></svg></button>
      <button class="on" aria-label="Guías"><svg viewBox="0 0 16 16"><path d="M1.500 0v16M13.500 0v16M10 1L5 16" stroke="#11e" stroke-width="1.200"/></svg></button>
    </div>
  </main>

  <div class="palette">
    <div class="swatches" id="swatches"></div>
    <button aria-label="Menú de paleta"></button>
  </div>
  <div class="scroll scroll-h palette-scroll">
    <svg viewBox="0 0 10 10"><path d="M7 1L3 5l4 4" fill="none" stroke="#bbb" stroke-width="2"/></svg>
    <div class="track"><div class="thumb"></div></div>
    <svg viewBox="0 0 10 10"><path d="M3 1l4 4-4 4" fill="none" stroke="#555" stroke-width="2"/></svg>
  </div>

  <footer class="status">
    <dl class="style">
      <dt>Relleno:</dt><dd>N/D</dd>
      <dt>Trazo:</dt><dd>N/D</dd>
    </dl>
    <label for="alpha">O:</label>
    <span class="spin alpha"><input id="alpha" value="0" disabled><span class="arrows"><button disabled aria-label="Más"></button><button disabled aria-label="Menos"></button></span></span>
    <div class="layer">
      <button aria-label="Visibilidad"><svg viewBox="0 0 10 10"><path d="M0 5q5-6 10 0-5 5-10 0z" fill="none" stroke="#444"/><circle cx="5" cy="5" r="2" fill="#333"/><path d="M2 1l1 2M5 0v2M8 1L7 3" stroke="#666"/></svg></button>
      <button aria-label="Bloquear capa"><svg viewBox="0 0 10 12"><use href="#lock"/></svg></button>
      <span class="combo"><select aria-label="Capa"><option>(raíz)</option></select><svg><use href="#chevron"/></svg></span>
    </div>
    <p>No se han seleccionado objetos. Haga clic, Mayús+clic o arrastre para seleccionar los objetos.</p>
    <dl class="coords">
      <dt>X:</dt><dd>187.50</dd>
      <dt>Y:</dt><dd>-20.83</dd>
    </dl>
    <label for="zoom">Z:</label>
    <span class="spin zoom"><input id="zoom" value="533%"><span class="arrows"><button aria-label="Más"></button><button aria-label="Menos"></button></span></span>
    <svg class="grip" viewBox="0 0 10 10"><path d="M8 1h2M8 5h2M4 5h2M8 9h2M4 9h2M0 9h2" stroke="#bbb" stroke-width="2"/></svg>
  </footer>

  <script src="script.js"></script>
</body>
</html>
```
FILE: styles.css
```css
* {
  box-sizing: border-box;
}

body {
  margin: 0;
  height: 100vh;
  display: flex;
  flex-direction: column;
  overflow: hidden;
  background: #fff;
  color: #000;
  font-family: Roboto, 'Open Sans', sans-serif;
  font-size: 12px;
  line-height: 16px;
}

button,
input,
select {
  margin: 0;
  padding: 0;
  border: none;
  border-radius: 0;
  background: none;
  color: inherit;
  font: inherit;
}

h1, h2, h3, p, dl, dd {
  margin: 0;
  font-size: 12px;
  font-weight: normal;
}

u {
  text-underline-offset: 2px;
}

button {
  display: flex;
  align-items: center;
  justify-content: center;
}

svg {
  display: block;
  flex: none;
}

.defs {
  position: absolute;
  width: 0;
  height: 0;
}

.muted {
  color: #777;
}

/* Barra de título y menú */
.titlebar {
  display: flex;
  align-items: center;
  height: 24px;
  padding: 0 14px 0 2px;
}

.logo {
  width: 16px;
  height: 16px;
  margin-right: 5px;
}

.window-buttons {
  display: flex;
  margin-left: auto;
  height: 20px;
}

.window-buttons button {
  width: 45px;
  height: 20px;
}

.window-buttons button:last-child {
  width: 34px;
  padding-left: 12px;
}

.window-buttons svg {
  width: 10px;
  height: 10px;
}

.menubar {
  display: flex;
  align-items: center;
  gap: 14px;
  height: 20px;
  padding: 0 8px;
  border-bottom: 1px solid #ddd;
}

.menubar a {
  color: #000;
  text-decoration: none;
}

/* Controles */
.controls {
  display: flex;
  align-items: center;
  height: 32px;
  padding-left: 2px;
  border-bottom: 1px solid #ddd;
}

.icon-group {
  display: flex;
  padding-right: 5px;
  margin-right: 6px;
  border-right: 1px solid #aaa;
}

.icon-group button,
.toggles button {
  width: 26px;
  height: 26px;
}

.icon-group svg,
.toggles svg {
  width: 16px;
  height: 16px;
}

.fields {
  display: flex;
  align-items: center;
  color: #777;
  padding-right: 4px;
  margin-right: 6px;
  border-right: 1px solid #aaa;
}

.fields label {
  margin: 0 5px 0 7px;
}

.fields .spin {
  width: 56px;
  height: 21px;
}

.lock {
  width: 26px;
}

.lock svg {
  width: 10px;
  height: 12px;
}

.toggles {
  display: flex;
}

.on {
  background: #cce6ff;
  box-shadow: inset 0 0 0 1px #99d1ff;
}

/* Campos numéricos */
.spin {
  display: flex;
  width: 62px;
  height: 23px;
}

.spin input {
  flex: 1;
  min-width: 0;
  padding-left: 3px;
  border: 1px solid #abadb3;
  border-right: none;
  background: #fff;
}

.spin input:disabled {
  background: #efefef;
  color: #777;
}

.arrows {
  display: flex;
  flex-direction: column;
  width: 10px;
  margin: 1px 0 1px 1px;
  flex: none;
}

.arrows button {
  flex: 1;
  border: 1px solid #acacac;
  background: #efefef;
}

.arrows button::before {
  content: '';
  border: 3px solid transparent;
  border-top: none;
  border-bottom: 3px solid #000;
}

.arrows button:last-child::before {
  border-top: 3px solid #000;
  border-bottom: none;
}

.arrows button:disabled {
  border-color: #d0d0d0;
  opacity: 0.7;
}

.combo {
  display: flex;
  align-items: center;
  width: 56px;
  height: 21px;
  border: 1px solid #abadb3;
  background: linear-gradient(90deg, #fff calc(100% - 17px), #abadb3 calc(100% - 17px) calc(100% - 16px), #e1e1e1 calc(100% - 16px));
}

.combo select {
  flex: 1;
  min-width: 0;
  height: 100%;
  padding-left: 2px;
  appearance: none;
  color: #000;
}

.combo svg {
  width: 10px;
  height: 10px;
  margin-right: 3px;
}

.unit {
  width: 43px;
  height: 19px;
}

/* Zona de trabajo */
.workspace {
  flex: 1;
  min-height: 0;
  display: flex;
}

.toolbox {
  width: 34px;
  padding: 1px 2px;
  overflow: hidden;
}

.toolbox button {
  width: 30px;
  height: 30px;
}

.toolbox svg {
  width: 23px;
  height: 23px;
}

.toolbox .text-tool {
  gap: 1px;
}

.text-tool b {
  font: bold 24px/24px 'DejaVu Sans', sans-serif;
}

.toolbox .text-tool svg {
  width: 6px;
}

.editor {
  flex: 1;
  min-width: 0;
  display: grid;
  grid-template-columns: 17px 1fr 24px;
  grid-template-rows: 15px 1fr 17px;
  background: #efefef;
}

.ruler {
  width: 100%;
  height: 100%;
  overflow: hidden;
  font-family: 'Liberation Sans', sans-serif;
  font-size: 9px;
}

.ruler-h {
  grid-column: 1 / 3;
}

.ruler-v {
  grid-column: 1;
  grid-row: 2;
}

.canvas {
  width: 100%;
  height: 100%;
  background: #fff;
}

.silk {
  font-family: 'DejaVu Sans', sans-serif;
  font-weight: 200;
  font-size: 31px;
  stroke: #000;
  stroke-width: 0.5px;
}

.zoom-corner,
.cms-corner {
  width: 19px;
}

.zoom-corner svg,
.cms-corner svg {
  width: 10px;
  height: 10px;
}

.scroll {
  display: flex;
  align-items: center;
}

.scroll > svg {
  width: 10px;
  height: 10px;
}

.scroll .track {
  flex: 1;
  display: flex;
}

.scroll .thumb {
  background: #cdcdcd;
}

.scroll-v {
  flex-direction: column;
  width: 15px;
  margin-left: 2px;
  padding: 4px 0;
}

.scroll-v .track {
  flex-direction: column;
  width: 100%;
  padding: 271px 0 230px;
}

.scroll-v .thumb {
  flex: 1;
}

.scroll-h {
  grid-column: 2;
  padding: 0 2px;
}

.scroll-h .track {
  height: 15px;
  padding: 0 365px 0 322px;
}

.scroll-h .thumb {
  flex: 1;
}

.cms-corner {
  grid-column: 3;
}

/* Panel derecho */
.dock {
  width: 370px;
  padding: 0 4px 0 1px;
  border-top: 1px solid #000;
  border-left: 2px solid #000;
  border-right: 1px solid #fff;
  background: #efefef;
  overflow: hidden;
}

.dialog-head {
  display: flex;
  align-items: center;
  height: 24px;
  border-bottom: 1px solid #999;
}

.i14 {
  width: 13px;
  height: 14px;
}

.dialog-head h2 {
  flex: 1;
}

.dialog-head button {
  width: 22px;
}

.dialog-head button svg {
  width: 12px;
  height: 12px;
}

.export {
  padding: 7px 7px 7px 6px;
  border-bottom: 1px solid #fff;
}

.export h3,
.tab-page strong {
  font-family: 'Open Sans', sans-serif;
  font-weight: bold;
}

.area-buttons {
  display: grid;
  grid-template-columns: repeat(4, 1fr);
  gap: 2px;
  height: 23px;
  margin-top: 6px;
}

.area-buttons button,
.big {
  border: 1px solid #acacac;
  background: #e1e1e1;
}

.area-buttons .on {
  border-color: #0054a0;
  background: #cce4f8;
  box-shadow: none;
}

.area-grid,
.size-grid {
  display: grid;
  grid-template-columns: 74px 62px 60px 62px;
  gap: 4px 24px;
  align-items: center;
  text-align: center;
  margin-top: 7px;
}

.size-grid {
  grid-template-columns: 58px 62px 64px 62px 45px;
  gap: 4px 15px;
  margin: 2px 0 7px;
}

.units {
  display: flex;
  align-items: center;
  justify-content: flex-end;
  gap: 4px;
  margin: 3px 0 6px;
}

.file-row {
  display: flex;
  align-items: center;
  gap: 10px;
  height: 30px;
  padding-right: 4px;
  margin: 2px 0 4px;
}

.entry {
  flex: 1;
  min-width: 0;
  height: 23px;
  padding: 0 3px 0 1px;
  border: 1px solid #abadb3;
  background: #fff;
}

.big {
  gap: 4px;
  height: 30px;
  padding: 0 3px 0 5px;
}

.big svg {
  width: 17px;
  height: 17px;
}

.check {
  display: flex;
  align-items: center;
  gap: 6px;
  height: 24px;
}

.check input {
  appearance: none;
  width: 13px;
  height: 13px;
  border: 1px solid #222;
  background: #fff;
  display: grid;
  place-items: center;
}

.check input:disabled {
  border-color: #ccc;
}

.check input:checked::before {
  content: '';
  width: 9px;
  height: 4px;
  border: solid #222;
  border-width: 0 0 1px 1px;
  transform: translateY(-1px) rotate(-45deg);
}

.progress {
  height: 25px;
  margin: 0 -3px 4px;
  border: 1px solid #bcbcbc;
  background: #e6e6e6;
}

.export-row {
  display: flex;
  align-items: center;
  justify-content: space-between;
  padding-left: 2px;
}

.export-row .big {
  height: 28px;
}

.export-row svg {
  width: 19px;
  height: 19px;
}

.dialog-tabs {
  display: grid;
  gap: 4px;
  padding: 4px 0 8px 1px;
}

.dialog-tabs button {
  gap: 3px;
  height: 19px;
  padding: 0 6px 0 1px;
  border: 1px solid #acacac;
  background: #e1e1e1;
}

.dialog-tabs .on {
  border-color: #0054a0;
  background: #cce4f8;
  box-shadow: none;
}

.dialog-tabs span {
  flex: 1;
  text-align: left;
}

.dialog-tabs i {
  border: 4px solid transparent;
  border-top: none;
  border-bottom: 4px solid #666;
}

.dialog-tabs .on i {
  border-bottom-color: #000;
}

/* Relleno y borde */
.fill {
  padding: 4px 4px 7px 3px;
  border-bottom: 1px solid #fff;
}

.tabs {
  display: flex;
  align-items: flex-end;
}

.tabs button {
  gap: 5px;
  height: 22px;
  padding: 0 5px 0 4px;
  border: 1px solid #d9d9d9;
  border-left: none;
  border-bottom: none;
}

.tabs button.on {
  height: 25px;
  padding: 0 7px 0 4px;
  border-left: 1px solid #d9d9d9;
  background: #fff;
  box-shadow: none;
}

.tabs svg {
  width: 9px;
  height: 9px;
}

.tab-page {
  height: 197px;
  padding: 12px 7px;
  border: 1px solid #d9d9d9;
  background: #fff;
}

.paint {
  display: flex;
  gap: 10px;
  height: 22px;
  padding-left: 5px;
}

.paint button,
.paint svg {
  width: 20px;
  height: 20px;
}

.paint b {
  font: bold 22px/20px 'DejaVu Sans', sans-serif;
  color: #333;
}

.rules {
  display: flex;
  margin-left: auto;
}

.paint .rules svg {
  width: 10px;
  height: 10px;
}

.tab-page strong {
  display: block;
  margin-top: 11px;
}

.bar {
  display: flex;
  height: 24px;
  margin-top: 4px;
}

.bar-body {
  flex: 1;
  display: flex;
  align-items: center;
  justify-content: space-between;
  padding: 0 3px 0 5px;
  border: 1px solid #abadb3;
  border-right: none;
  box-shadow: inset 0 0 0 1px #fff;
}

.bar input {
  width: 60px;
  text-align: right;
}

.full .bar-body {
  padding-right: 1px;
  background: #b4c1cc;
  border-bottom: 2px solid #000;
  border-right: 2px solid #000;
}

/* Barras de iconos */
.sidebar {
  width: 31px;
  padding: 2px 3px 0 2px;
  overflow: hidden;
}

.sidebar button {
  width: 26px;
  height: 26px;
}

.sidebar svg {
  width: 16px;
  height: 16px;
}

.sidebar hr {
  width: 16px;
  height: 1px;
  margin: 5px 5px 6px;
  border: none;
  background: #aaa;
}

.snapbar {
  width: 29px;
  padding-left: 1px;
}

.glyph b {
  font: bold 18px/16px 'DejaVu Sans', sans-serif;
}

.serif b {
  font: bold 20px/16px 'DejaVu Serif', serif;
}

/* Paleta */
.palette {
  display: flex;
  height: 19px;
  padding: 0 11px 0 2px;
  border-top: 1px solid #aaa;
  background: #fff;
}

.swatches {
  flex: 1;
  min-width: 0;
  display: flex;
  height: 16px;
  overflow: hidden;
  border-top: 2px solid #000;
}

.swatches button {
  flex: none;
  width: 14px;
  height: 14px;
}

.swatches svg {
  width: 14px;
  height: 14px;
}

.palette > button {
  width: 0;
  height: 8px;
}

.palette > button::before {
  content: '';
  margin: 4px 0 0 9px;
  border: 4px solid transparent;
  border-left: none;
  border-right: 4px solid #000;
}

.palette-scroll {
  height: 17px;
  padding: 0 12px 0 3px;
  background: #efefef;
}

.palette-scroll .track {
  padding: 0 1290px 0 4px;
}

/* Barra de estado */
.status {
  display: flex;
  align-items: center;
  height: 26px;
  padding: 0 2px;
  background: #efefef;
}

.status dl {
  display: grid;
  line-height: 13px;
}

.style {
  grid-template-columns: 73px 51px;
}

.alpha {
  width: 47px;
  height: 21px;
  margin: 0 4px 0 3px;
}

.layer {
  display: flex;
  align-items: center;
  gap: 5px;
  height: 26px;
  padding-left: 5px;
  border-left: 1px solid #aaa;
}

.layer button svg {
  width: 10px;
  height: 11px;
}

.layer .combo {
  width: 64px;
  height: 25px;
  font-size: 11px;
}

.layer select {
  padding-left: 7px;
}

.status p {
  flex: 1;
  padding-left: 5px;
}

.coords {
  grid-template-columns: 18px 51px;
  padding-left: 2px;
  border-left: 1px solid #aaa;
  font-family: 'DejaVu Sans Mono', monospace;
}

.zoom {
  width: 56px;
  height: 21px;
  margin: 0 7px 0 3px;
}

.grip {
  width: 10px;
  height: 10px;
  align-self: flex-end;
  margin-bottom: 4px;
}
```
FILE: script.js
```js
const NS = 'http://www.w3.org/2000/svg';

function add(parent, name, attrs, text) {
  const el = document.createElementNS(NS, name);
  for (const key in attrs) el.setAttribute(key, attrs[key]);
  if (text !== undefined) el.textContent = text;
  parent.appendChild(el);
}

// Regla horizontal: 10 unidades cada 53.33px, el cero a 327px
const rulerH = document.getElementById('ruler-h');
const unit = 16 / 3;
let ticks = 'M17 14H1433';
for (let i = -58; i <= 206; i++) {
  const x = Math.round(327 + i * unit) + 0.5;
  const top = i % 10 === 0 ? 3 : i % 2 === 0 ? 9 : 11;
  ticks += `M${x} ${top}V14`;
  if (i % 10 === 0) add(rulerH, 'text', { x: x + 1, y: 10 }, i);
}
add(rulerH, 'text', { x: 17, y: 10 }, '0');
add(rulerH, 'path', { d: ticks, stroke: '#000' });
add(rulerH, 'path', { d: 'M1323 9h9l-4.500 5z' });

// Regla vertical: 25 unidades cada 133.33px
const rulerV = document.getElementById('ruler-v');
ticks = 'M15.500 0V870';
for (let i = -4; i <= 61; i++) {
  const y = Math.round(52 + i * 40 / 3) + 0.5;
  ticks += `M${i % 10 === 0 ? 4 : 12} ${y}H15`;
  if (i % 10 === 0) {
    String(125 - i * 2.5).split('').forEach((c, n) => {
      add(rulerV, 'text', { x: 3, y: y + 8 + n * 8 }, c);
    });
  }
}
add(rulerV, 'path', { d: ticks, stroke: '#000' });
add(rulerV, 'path', { d: 'M11 825v9l4-4.500z' });

// Paleta de Inkscape
const colors = ('000000 1a1a1a 333333 4d4d4d 666666 808080 999999 b3b3b3 cccccc e6e6e6 ececec f2f2f2 f9f9f9 ffffff ' +
  '800000 ff0000 808000 ffff00 008000 00ff00 008080 00ffff 000080 0000ff 800080 ff00ff ' +
  '2b0000 550000 800000 aa0000 d40000 ff0000 ff2a2a ff5555 ff8080 ffaaaa ffd5d5 ' +
  '280b0b 501616 782121 a02c2c c83737 d35f5f de8787 e9afaf f4d7d7 ' +
  '241c1c 483737 6c5353 916f6f ac9393 c8b7b7 e3dbdb ' +
  '2b1100 552200 803300 aa4400 d45500 ff6600 ff7f2a ff9955 ffb380 ffccaa ffe6d5 ' +
  '28170b 502d16 784421 a05a2c c87137 d38d5f deaa87 e9c6af f4e3d7 ' +
  '241f1c 483e37 6c5d53 917c6f ac9d93 c8beb7 e3dedb ' +
  '2b2200 554400 806600 aa8800 d4aa00 ffcc00 ffd42a ffdd55 ffe680 ffeeaa fff6d5 ' +
  '28220b 504416 786721 a0892c c8ab37 d3bc5f decd87 e9ddaf f4eed7 ' +
  '24221c 484537 6c6753 918a6f aca793 c8c4b7 e3e2db ' +
  '222b00 445500 668000 88aa00 aad400 ccff00 d4ff2a ddff55 e5ff80 eeffaa f6ffd5 ' +
  '23280b 445016 677821 89a02c abc837 bcd35f cdde87 dde9af eef4d7 ' +
  '22241c 454837 676c53 8a916f a7ac93 c4c8b7 e2e3db 112b00 225500').split(' ');

const swatches = document.getElementById('swatches');
const none = document.createElement('button');
none.setAttribute('aria-label', 'Ninguno');
none.innerHTML = '<svg viewBox="0 0 14 14"><path d="M0 0l14 14M14 0L0 14" stroke="#600" stroke-width="1.500"/></svg>';
swatches.appendChild(none);
colors.forEach((color) => {
  const swatch = document.createElement('button');
  swatch.style.background = '#' + color;
  swatch.setAttribute('aria-label', '#' + color);
  swatches.appendChild(swatch);
});

// Mostrar el final de la ruta
const filename = document.getElementById('filename');
filename.scrollLeft = filename.scrollWidth;
```
